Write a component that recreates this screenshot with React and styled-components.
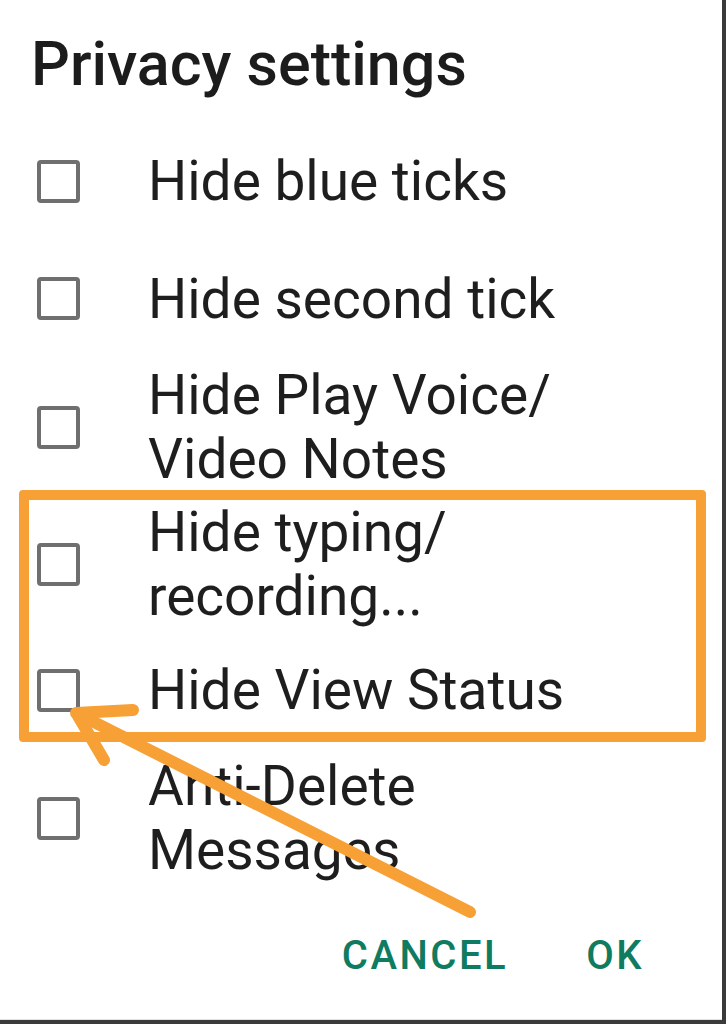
import React from 'react';
import styled, { createGlobalStyle } from 'styled-components';

const GlobalStyle = createGlobalStyle`
  html, body {
    margin: 0;
    padding: 0;
    background: #3a3a3a;
  }
`;

const options = [
  { label: ['Hide blue ticks'], height: 118 },
  { label: ['Hide second tick'], height: 117 },
  { label: ['Hide Play Voice/', 'Video Notes'], height: 140 },
  { label: ['Hide typing/', 'recording...'], height: 134 },
  { label: ['Hide View Status'], height: 118 },
  { label: ['Anti-Delete', 'Messages'], height: 138 },
];

const App = () => {
  return (
    <>
      <GlobalStyle />
      <Dialog>
        <Title>Privacy settings</Title>
        <List>
          {options.map((opt, i) => (
            <Row key={i} $height={opt.height}>
              <Checkbox />
              <Label>
                {opt.label.map((line, j) => (
                  <span key={j}>{line}</span>
                ))}
              </Label>
            </Row>
          ))}
        </List>
        <Actions>
          <TextButton>CANCEL</TextButton>
          <TextButton>OK</TextButton>
        </Actions>

        <Highlight />
        <Arrow viewBox="0 0 722 1020" width="722" height="1020">
          <g stroke="#f7a035" strokeWidth="12" strokeLinecap="round" strokeLinejoin="round" fill="none">
            <line x1="78" y1="714" x2="470" y2="912" />
            <line x1="76" y1="713" x2="133" y2="710" />
            <line x1="78" y1="716" x2="104" y2="760" />
          </g>
        </Arrow>
      </Dialog>
    </>
  );
};

const Dialog = styled.div`
  position: relative;
  width: 722px;
  height: 1019px;
  background: #ffffff;
  border-bottom: 1px solid #e2e2e2;
  font-family: Roboto, "Liberation Sans", sans-serif;
  overflow: hidden;
`;

const Title = styled.h1`
  margin: 0;
  padding: 29px 0 0 31px;
  font-size: 61px;
  line-height: 70px;
  font-weight: 500;
  color: #1c1c1c;
`;

const List = styled.div`
  display: flex;
  flex-direction: column;
  margin-top: 23px;
`;

const Row = styled.div`
  display: flex;
  align-items: center;
  height: ${(p) => p.$height}px;
  padding-left: 37px;
`;

const Checkbox = styled.span`
  flex: none;
  box-sizing: border-box;
  width: 43px;
  height: 43px;
  border: 4px solid #6f6f6f;
  border-radius: 4px;
`;

const Label = styled.div`
  display: flex;
  flex-direction: column;
  margin-left: 68px;
  font-size: 55px;
  line-height: 64px;
  color: #1e1e1e;
  white-space: nowrap;
`;

const Actions = styled.div`
  display: flex;
  justify-content: flex-end;
  gap: 78px;
  padding-right: 78px;
  margin-top: 45px;
`;

const TextButton = styled.button`
  border: none;
  background: none;
  padding: 0;
  font-family: Roboto, "Liberation Sans", sans-serif;
  font-size: 40px;
  line-height: 48px;
  font-weight: 500;
  letter-spacing: 2.5px;
  color: #0f7b60;
`;

const Highlight = styled.div`
  position: absolute;
  left: 19px;
  top: 490px;
  width: 687px;
  height: 252px;
  box-sizing: border-box;
  border: 10px solid #f7a035;
  border-radius: 4px;
  pointer-events: none;
`;

const Arrow = styled.svg`
  position: absolute;
  left: 0;
  top: 0;
  pointer-events: none;
`;

export default App;
